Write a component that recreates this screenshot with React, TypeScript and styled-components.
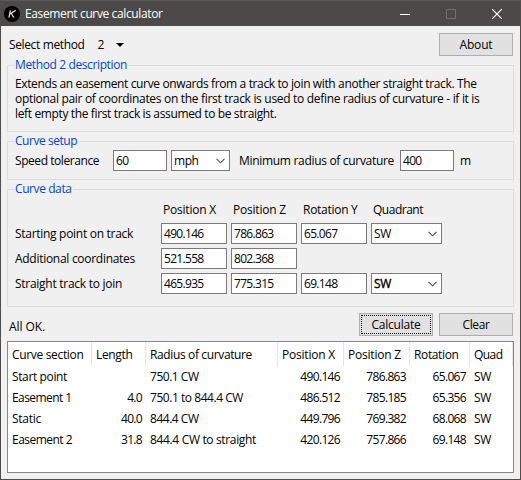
import React from "react";
import styled, { createGlobalStyle, css } from "styled-components";

const GlobalStyle = createGlobalStyle`
  *, *::before, *::after { box-sizing: border-box; }
  body { margin: 0; background: #f0f0f0; }
  input, button, table { font: inherit; color: inherit; letter-spacing: inherit; }
`;

const Window = styled.div`
  display: flex;
  flex-direction: column;
  width: 521px;
  height: 480px;
  border: 1px solid #4f4d4b;
  border-top-color: #5b5957;
  background: #f0f0f0;
  color: #000;
  font: 12px/15px "Open Sans", "Noto Sans", sans-serif;
  letter-spacing: -0.37px;
  white-space: nowrap;
  overflow: hidden;
`;

const Text = styled.span<{ $track?: number; $indent?: number }>`
  padding-left: ${(p) => p.$indent ?? 0}px;
  letter-spacing: ${(p) => p.$track ?? -0.37}px;
`;

const TitleBar = styled.header`
  display: flex;
  align-items: center;
  flex: none;
  height: 25px;
  padding-left: 3px;
  background: #4c4a48;
  color: #fff;
`;

const Title = styled.h1`
  flex: 1;
  margin: 0 0 1px 5px;
  font-size: 12px;
  font-weight: 400;
  letter-spacing: -0.376px;
`;

const AppIcon = styled.svg`
  width: 16px;
  height: 16px;
  display: block;
`;

const WindowControl = styled.button<{ $dim?: boolean }>`
  display: flex;
  align-items: center;
  justify-content: center;
  width: 46px;
  height: 25px;
  padding: 0;
  border: 0;
  background: none;
  color: ${(p) => (p.$dim ? "#71706e" : "#fff")};
  svg { display: block; }
`;

const Content = styled.main`
  display: flex;
  flex-direction: column;
  flex: 1;
  padding: 7px 6px 6px;
`;

const Toolbar = styled.div`
  display: flex;
  align-items: center;
  height: 23px;
  padding: 0 1px 0 2px;
`;

const MethodMenu = styled.button`
  display: flex;
  align-items: center;
  gap: 12px;
  margin: 0 auto 0 13px;
  padding: 0;
  border: 0;
  background: none;
  svg { display: block; }
`;

const Button = styled.button<{ $focused?: boolean; $track: number }>`
  width: 74px;
  height: 23px;
  padding: 0 0 1px;
  border: 1px solid #adadad;
  background: #e1e1e1;
  line-height: 15px;
  && { letter-spacing: ${(p) => p.$track}px; }
  ${(p) =>
    p.$focused &&
    css`
      outline: 1px dotted #000;
      outline-offset: -3px;
    `}
`;

const Group = styled.fieldset<{ $gap: number; $height: number }>`
  display: flow-root;
  position: relative;
  min-width: 0;
  flex: none;
  height: ${(p) => p.$height}px;
  margin: ${(p) => p.$gap}px 0 0;
  padding: 0 7px;
  border: 1px solid #dcdcdc;
`;

const GroupTitle = styled.span<{ $track: number }>`
  position: absolute;
  top: -9px;
  left: 7px;
  padding-right: 1px;
  background: #f0f0f0;
  color: #0046d5;
  letter-spacing: ${(p) => p.$track}px;
`;

const Description = styled.p`
  display: flex;
  flex-direction: column;
  margin: 10px 0 0;
`;

const SetupRow = styled.div`
  display: grid;
  grid-template-columns: 94px 54px 59px 162px 54px auto;
  column-gap: 4px;
  align-items: center;
  margin-top: 8px;
  height: 21px;
`;

const fieldBox = css`
  height: 21px;
  min-width: 0;
  width: 100%;
  border: 1px solid #7a7a7a;
  background: #fff;
  line-height: 15px;
`;

const Field = styled.input`
  ${fieldBox}
  padding: 0 2px 1px;
  outline: 0;
  && { letter-spacing: -0.69px; }
`;

const Combo = styled.div<{ $heavy?: boolean; $track: number }>`
  ${fieldBox}
  display: flex;
  align-items: center;
  justify-content: space-between;
  padding: 0 4px 1px 2px;
  letter-spacing: ${(p) => p.$track}px;
  ${(p) => p.$heavy && "-webkit-text-stroke: 0.35px #000;"}
  svg { display: block; margin-top: 1px; }
`;

const DataGrid = styled.div`
  display: grid;
  grid-template-columns: 142px 66px 66px 66px 71px;
  grid-template-rows: 17px 21px 21px 21px;
  gap: 4px;
  align-items: center;
  margin-top: 12px;
`;

const Heading = styled.span<{ $track: number; $first?: boolean }>`
  align-self: start;
  padding-left: 2px;
  letter-spacing: ${(p) => p.$track}px;
  grid-column: ${(p) => (p.$first ? 2 : "auto")};
`;

const RowLabel = styled.label<{ $track: number }>`
  grid-column: 1;
  letter-spacing: ${(p) => p.$track}px;
`;

const ActionBar = styled.div`
  display: flex;
  align-items: center;
  gap: 6px;
  height: 23px;
  margin: 6px 0 5px;
  padding: 0 1px 0 2px;
`;

const Status = styled.output`
  flex: 1;
  padding-top: 4px;
  letter-spacing: -0.085px;
`;

const ResultsFrame = styled.div`
  height: 132px;
  border: 1px solid #828790;
  background: #fff;
`;

const Results = styled.table`
  table-layout: fixed;
  width: 505px;
  border-collapse: separate;
  border-spacing: 0;
  line-height: 15px;
`;

const HeadCell = styled.th<{ $w: number; $track: number }>`
  width: ${(p) => p.$w}px;
  height: 24px;
  padding: 0 0 0 4px;
  border-right: 1px solid #e5e5e5;
  font-weight: 400;
  text-align: left;
  letter-spacing: ${(p) => p.$track}px;
`;

const Cell = styled.td<{ $right?: boolean; $track: number }>`
  height: 21px;
  padding: ${(p) => (p.$right ? "0 4px 0 0" : "0 0 0 4px")};
  text-align: ${(p) => (p.$right ? "right" : "left")};
  letter-spacing: ${(p) => p.$track}px;
`;

const Chevron = () => (
  <svg width="9" height="6" viewBox="0 0 9 6" fill="none" stroke="#505050" strokeWidth="1.1">
    <path d="M0.5 0.8 4.5 4.8 8.5 0.8" />
  </svg>
);

const columns: { name: string; width: number; track: number; right?: boolean }[] = [
  { name: "Curve section", width: 84, track: -0.328 },
  { name: "Length", width: 54, track: -0.336, right: true },
  { name: "Radius of curvature", width: 132, track: -0.367 },
  { name: "Position X", width: 66, track: -0.212, right: true },
  { name: "Position Z", width: 66, track: -0.212, right: true },
  { name: "Rotation", width: 60, track: -0.369, right: true },
  { name: "Quad", width: 43, track: -0.55 },
];

const results = [
  ["Start point", "", "750.1 CW", "490.146", "786.863", "65.067", "SW"],
  ["Easement 1", "4.0", "750.1 to 844.4 CW", "486.512", "785.185", "65.356", "SW"],
  ["Static", "40.0", "844.4 CW", "449.796", "769.382", "68.068", "SW"],
  ["Easement 2", "31.8", "844.4 CW to straight", "420.126", "757.866", "69.148", "SW"],
];

const tracking: Record<string, number> = {
  "Start point": -0.368,
  "Easement 1": -0.58,
  "Easement 2": -0.526,
  Static: -0.263,
  "750.1 CW": -0.482,
  "844.4 CW": -0.482,
  "750.1 to 844.4 CW": -0.452,
  "844.4 CW to straight": -0.342,
  SW: -0.33,
};

const points = [
  { label: "Starting point on track", track: -0.29, values: ["490.146", "786.863", "65.067"], quadrant: "SW" },
  { label: "Additional coordinates", track: -0.283, values: ["521.558", "802.368"] },
  { label: "Straight track to join", track: -0.273, values: ["465.935", "775.315", "69.148"], quadrant: "SW", heavy: true },
];

export default function App() {
  return (
    <>
      <GlobalStyle />
      <Window>
        <TitleBar>
          <AppIcon viewBox="0 0 16 16">
            <circle cx="8" cy="8" r="8" fill="#000" />
            <path d="M6.4 4.3 4.9 11.6M11.8 4.6C9.6 4.7 8.2 7.3 6 8M7.3 7.5C8.6 8 8.1 11.2 10.3 11.2" fill="none" stroke="#e4e4e4" strokeWidth="1.25" />
          </AppIcon>
          <Title>Easement curve calculator</Title>
          <WindowControl aria-label="Minimize">
            <svg width="10" height="10"><path d="M0 5.5H10" stroke="currentColor" /></svg>
          </WindowControl>
          <WindowControl aria-label="Maximize" $dim>
            <svg width="10" height="10"><path d="M.5 .5H9.5V9.5H.5Z" fill="none" stroke="currentColor" /></svg>
          </WindowControl>
          <WindowControl aria-label="Close">
            <svg width="10" height="10"><path d="M0 0 10 10M10 0 0 10" stroke="currentColor" strokeWidth="1.2" /></svg>
          </WindowControl>
        </TitleBar>
        <Content>
          <Toolbar>
            <Text>Select method</Text>
            <MethodMenu>
              2
              <svg width="8" height="4"><path d="M0 0H8L4 4Z" fill="#000" /></svg>
            </MethodMenu>
            <Button $track={-0.157}>About</Button>
          </Toolbar>

          <Group $gap={9} $height={67}>
            <GroupTitle $track={-0.377}>Method 2 description</GroupTitle>
            <Description>
              <Text $track={-0.369}>Extends an easement curve onwards from a track to join with another straight track. The</Text>
              <Text $track={-0.311}>optional pair of coordinates on the first track is used to define radius of curvature - if it is</Text>
              <Text $track={-0.363}>left empty the first track is assumed to be straight.</Text>
            </Description>
          </Group>

          <Group $gap={9} $height={39}>
            <GroupTitle $track={-0.464}>Curve setup</GroupTitle>
            <SetupRow>
              <Text $track={-0.436}>Speed tolerance</Text>
              <Field defaultValue="60" />
              <Combo $track={-0.437}>mph<Chevron /></Combo>
              <Text $track={-0.31} $indent={5}>Minimum radius of curvature</Text>
              <Field defaultValue="400" />
              <Text $indent={2}>m</Text>
            </SetupRow>
          </Group>

          <Group $gap={9} $height={118}>
            <GroupTitle $track={-0.413}>Curve data</GroupTitle>
            <DataGrid>
              <Heading $first $track={-0.212}>Position X</Heading>
              <Heading $track={-0.212}>Position Z</Heading>
              <Heading $track={-0.278}>Rotation Y</Heading>
              <Heading $track={-0.489}>Quadrant</Heading>
              {points.map((p) => (
                <React.Fragment key={p.label}>
                  <RowLabel $track={p.track}>{p.label}</RowLabel>
                  {p.values.map((v) => <Field key={v} defaultValue={v} />)}
                  {p.quadrant && <Combo $track={-0.33} $heavy={p.heavy}>{p.quadrant}<Chevron /></Combo>}
                </React.Fragment>
              ))}
            </DataGrid>
          </Group>

          <ActionBar>
            <Status>All OK.</Status>
            <Button $focused $track={-0.231}>Calculate</Button>
            <Button $track={-0.38}>Clear</Button>
          </ActionBar>

          <ResultsFrame>
            <Results>
              <thead>
                <tr>
                  {columns.map((c) => <HeadCell key={c.name} $w={c.width} $track={c.track}>{c.name}</HeadCell>)}
                </tr>
              </thead>
              <tbody>
                {results.map((row) => (
                  <tr key={row[0]}>
                    {row.map((v, i) => (
                      <Cell key={i} $right={columns[i].right} $track={tracking[v] ?? -0.67}>{v}</Cell>
                    ))}
                  </tr>
                ))}
              </tbody>
            </Results>
          </ResultsFrame>
        </Content>
      </Window>
    </>
  );
}
